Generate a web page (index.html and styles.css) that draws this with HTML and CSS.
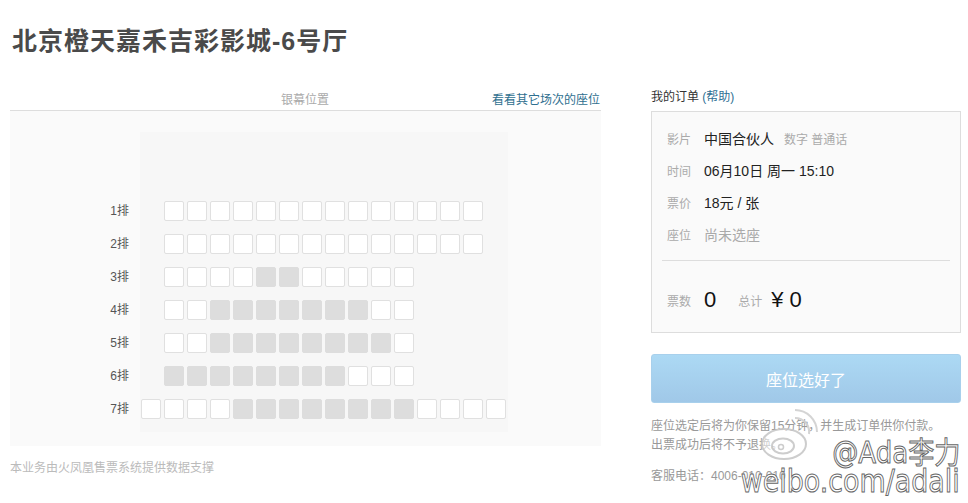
FILE: index.html
```html
<!DOCTYPE html>
<html lang="zh-CN">
<head>
<meta charset="utf-8">
<title>选座</title>
<link rel="stylesheet" href="styles.css">
</head>
<body>
<h1 class="title">北京橙天嘉禾吉彩影城-6号厅</h1>
<div class="main">
  <div class="left">
    <div class="screen-head">
      <span class="screen-label">银幕位置</span>
      <a class="other-link" href="#">看看其它场次的座位</a>
    </div>
    <div class="seatmap">
      <div class="labels">
        <div class="rlabel">1排</div>
        <div class="rlabel">2排</div>
        <div class="rlabel">3排</div>
        <div class="rlabel">4排</div>
        <div class="rlabel">5排</div>
        <div class="rlabel">6排</div>
        <div class="rlabel">7排</div>
      </div>
      <div class="inner">
        <div class="srow shift">
          <i class="s"></i><i class="s"></i><i class="s"></i><i class="s"></i><i class="s"></i><i class="s"></i><i class="s"></i><i class="s"></i><i class="s"></i><i class="s"></i><i class="s"></i><i class="s"></i><i class="s"></i><i class="s"></i>
        </div>
        <div class="srow shift">
          <i class="s"></i><i class="s"></i><i class="s"></i><i class="s"></i><i class="s"></i><i class="s"></i><i class="s"></i><i class="s"></i><i class="s"></i><i class="s"></i><i class="s"></i><i class="s"></i><i class="s"></i><i class="s"></i>
        </div>
        <div class="srow shift">
          <i class="s"></i><i class="s"></i><i class="s"></i><i class="s"></i><i class="s sold"></i><i class="s sold"></i><i class="s"></i><i class="s"></i><i class="s"></i><i class="s"></i><i class="s"></i>
        </div>
        <div class="srow shift">
          <i class="s"></i><i class="s"></i><i class="s sold"></i><i class="s sold"></i><i class="s sold"></i><i class="s sold"></i><i class="s sold"></i><i class="s sold"></i><i class="s sold"></i><i class="s"></i><i class="s"></i>
        </div>
        <div class="srow shift">
          <i class="s"></i><i class="s"></i><i class="s sold"></i><i class="s sold"></i><i class="s sold"></i><i class="s sold"></i><i class="s sold"></i><i class="s sold"></i><i class="s sold"></i><i class="s sold"></i><i class="s"></i>
        </div>
        <div class="srow shift">
          <i class="s sold"></i><i class="s sold"></i><i class="s sold"></i><i class="s sold"></i><i class="s sold"></i><i class="s sold"></i><i class="s sold"></i><i class="s sold"></i><i class="s"></i><i class="s"></i><i class="s"></i>
        </div>
        <div class="srow">
          <i class="s"></i><i class="s"></i><i class="s"></i><i class="s"></i><i class="s sold"></i><i class="s sold"></i><i class="s sold"></i><i class="s sold"></i><i class="s sold"></i><i class="s sold"></i><i class="s sold"></i><i class="s sold"></i><i class="s"></i><i class="s"></i><i class="s"></i><i class="s"></i>
        </div>
      </div>
    </div>
    <p class="footnote">本业务由火凤凰售票系统提供数据支撑</p>
  </div>

  <div class="right">
    <div class="order-head">我的订单 <a class="help" href="#">(帮助)</a></div>
    <div class="order-box">
      <div class="orow"><span class="olabel">影片</span><span class="oval">中国合伙人</span><span class="osub">数字 普通话</span></div>
      <div class="orow"><span class="olabel">时间</span><span class="oval">06月10日 周一 15:10</span></div>
      <div class="orow"><span class="olabel">票价</span><span class="oval">18元 / 张</span></div>
      <div class="orow"><span class="olabel">座位</span><span class="oval muted">尚未选座</span></div>
      <div class="divider"></div>
      <div class="orow total">
        <span class="olabel">票数</span><span class="big">0</span>
        <span class="olabel sum">总计</span><span class="big">¥ 0</span>
      </div>
    </div>
    <button class="confirm" type="button">座位选好了</button>
    <p class="note">座位选定后将为你保留15分钟，并生成订单供你付款。<br>出票成功后将不予退换。</p>
    <p class="note phone">客服电话：4006-010-010</p>
  </div>
</div>

<div class="watermark">
  <svg class="wb-logo" width="62" height="62" viewBox="0 0 62 62">
    <ellipse cx="27" cy="40" rx="22" ry="15" fill="rgba(255,255,255,0.6)" stroke="#c8c8c8" stroke-width="2"/>
    <ellipse cx="26" cy="42" rx="11" ry="7.5" fill="none" stroke="#c8c8c8" stroke-width="2"/>
    <circle cx="24" cy="43" r="2.5" fill="none" stroke="#c8c8c8" stroke-width="1.5"/>
    <path d="M38 14 A14 14 0 0 1 52 30" fill="none" stroke="#d0d0d0" stroke-width="2"/>
    <path d="M38 6 A22 22 0 0 1 60 28" fill="none" stroke="#d0d0d0" stroke-width="2"/>
  </svg>
  <div class="wm-name">@Ada李力</div>
  <div class="wm-url">weibo.com/adali</div>
</div>
</body>
</html>
```

FILE: styles.css
```css
* { box-sizing: border-box; }
html, body { margin: 0; padding: 0; background: #fff; }
body {
  position: relative;
  width: 968px;
  height: 503px;
  overflow: hidden;
  font-family: "Liberation Sans", "Noto Sans CJK SC", sans-serif;
  font-size: 12px;
  color: #333;
}
a { text-decoration: none; }

.title {
  margin: 0;
  padding: 25px 0 0 12px;
  height: 86px;
  font-size: 25px;
  line-height: 32px;
  font-weight: bold;
  color: #4a4a4a;
  letter-spacing: 1px;
}

.main {
  display: flex;
  gap: 50px;
  padding-left: 10px;
}

.left { width: 591px; }

.screen-head {
  position: relative;
  height: 25px;
  border-bottom: 1px solid #ddd;
  display: flex;
  justify-content: center;
  align-items: flex-start;
  padding-top: 6px;
}
.screen-label {
  color: #aaa;
  font-size: 12px;
  line-height: 16px;
  margin-left: -1px;
}
.other-link {
  position: absolute;
  right: 1px;
  top: 6px;
  color: #2f6f8f;
  font-size: 12px;
  line-height: 16px;
}

.seatmap {
  display: flex;
  height: 335px;
  background: #fafafa;
  padding-top: 21px;
}
.labels {
  width: 130px;
  padding-top: 69px;
  padding-right: 11px;
}
.rlabel {
  height: 20px;
  margin-bottom: 13px;
  line-height: 20px;
  text-align: right;
  color: #555;
  font-size: 12px;
}
.inner {
  width: 368px;
  height: 300px;
  background: #f7f7f7;
  padding: 69px 0 0 1px;
}
.srow {
  display: flex;
  gap: 3px;
  height: 20px;
  margin-bottom: 13px;
}
.srow.shift { padding-left: 23px; }
.s {
  display: block;
  width: 20px;
  height: 20px;
  border: 1px solid #e0e0e0;
  border-radius: 2px;
  background: #fff;
}
.s.sold { background: #dddddd; border-color: #dddddd; }

.footnote {
  margin: 14px 0 0 0;
  color: #bbb;
  font-size: 12px;
  line-height: 16px;
}

.right { width: 310px; }

.order-head {
  height: 25px;
  padding-top: 3px;
  font-size: 12px;
  line-height: 16px;
  color: #333;
}
.help { color: #2f6f93; }

.order-box {
  height: 222px;
  border: 1px solid #ddd;
  background: #fafafa;
  padding: 10px 10px 0 10px;
}
.orow {
  display: flex;
  align-items: center;
  height: 32px;
  padding-left: 5px;
}
.olabel {
  width: 37px;
  color: #aaa;
  font-size: 12px;
}
.oval {
  font-size: 14px;
  color: #222;
}
.oval.muted { color: #aaa; }
.osub {
  margin-left: 10px;
  color: #aaa;
  font-size: 12px;
}
.divider {
  height: 1px;
  background: #ddd;
  margin: 10px 0 19px 0;
}
.orow.total { height: 40px; }
.big {
  font-size: 22px;
  color: #111;
  line-height: 24px;
}
.olabel.sum { width: auto; margin-left: 22px; margin-right: 9px; }

.confirm {
  display: block;
  width: 310px;
  height: 49px;
  margin-top: 21px;
  border: 1px solid #a8d0ec;
  border-radius: 3px;
  background: linear-gradient(#acd9f4, #a0c8e8);
  color: #fff;
  font-family: "Noto Sans CJK SC", sans-serif;
  font-size: 16px;
  padding: 0;
}

.note {
  margin: 14px 0 0 0;
  color: #999;
  font-size: 12px;
  line-height: 19px;
}
.note.phone { margin-top: 12px; }

.watermark {
  position: absolute;
  left: 755px;
  top: 400px;
  width: 213px;
  height: 103px;
}
.wb-logo {
  position: absolute;
  left: 2px;
  top: 4px;
  opacity: 0.9;
}
.wm-name {
  position: absolute;
  right: 8px;
  top: 36px;
  font-family: "DejaVu Sans", "Noto Sans CJK SC", sans-serif;
  font-size: 30px;
  line-height: 34px;
  color: #fff;
  -webkit-text-stroke: 1px #666;
  transform: scaleX(0.87);
  transform-origin: right center;
}
.wm-url {
  position: absolute;
  right: 8px;
  top: 62px;
  font-family: "DejaVu Sans", sans-serif;
  font-size: 32px;
  line-height: 38px;
  color: #fff;
  -webkit-text-stroke: 1px #666;
  transform: scaleX(0.84);
  transform-origin: right center;
}
```
